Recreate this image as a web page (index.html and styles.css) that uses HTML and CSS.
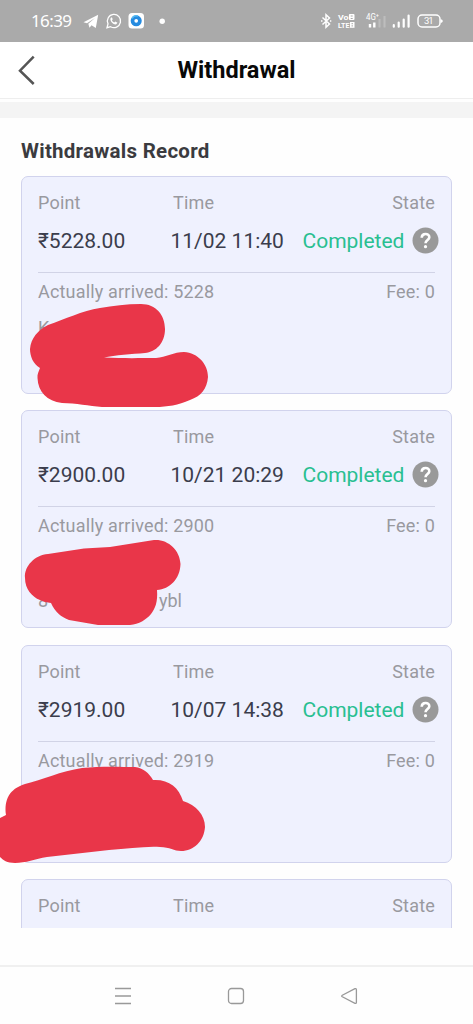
FILE: index.html
```html
<!DOCTYPE html>
<html lang="en">
<head>
<meta charset="utf-8">
<title>Withdrawal</title>
<link rel="stylesheet" href="styles.css">
</head>
<body>
<div class="screen">
  <div class="status">
    <span class="clock">16:39</span>
    <svg class="notifs" width="84" height="20" viewBox="83 11 84 20">
      <path d="M83.500 22.200L98.200 14.800L95.800 28L91.500 25.200L89.500 27.800L88.300 23.800L95 18L87 23.200Z" fill="#fff"/>
      <path d="M107 27.700L108 23.800A6.600 6.600 0 1 1 110.600 26.700Z" fill="none" stroke="#fff" stroke-width="1.300"/>
      <path d="M111 17.500C109 19.500 112 24.500 116 24.500L117.500 22.800L115.300 21.600L114.300 22.500C113 22 112.200 21 112 20.200L112.700 19.300L112 17.400Z" fill="#fff"/>
      <rect x="128.500" y="13" width="15.500" height="15.500" rx="3.500" fill="#fff"/>
      <circle cx="136.200" cy="20.800" r="3.700" fill="#fff" stroke="#258be0" stroke-width="3.700"/>
      <path d="M132 18.500A5 5 0 0 1 138 16" fill="none" stroke="#55baf2" stroke-width="1.500"/>
      <circle cx="162.200" cy="21.200" r="2.700" fill="#fff"/>
    </svg>
    <svg class="system" width="124" height="20" viewBox="320 11 124 20">
      <path d="M322.500 17.500L329.500 24L326 27.300V14.700L329.500 18L322.500 24.500M321 21h1.500M330 21h1.300" fill="none" stroke="#fff" stroke-width="1.500"/>
      <g class="tiny" fill="#fff">
        <text x="338" y="19.500" textLength="10.500" lengthAdjust="spacingAndGlyphs">Vo</text>
        <text x="338" y="27.800" textLength="11.500" lengthAdjust="spacingAndGlyphs">LTE</text>
        <rect x="348.900" y="14" width="5.600" height="6" rx="1"/>
        <path d="M350.700 16h2M350.700 18.500h2" stroke="#aaa"/>
        <rect x="350" y="22" width="4.500" height="5.800"/>
        <path d="M351.500 23.700h1.500M351.500 25.900h1.500" stroke="#aaa"/>
      </g>
      <text class="network" x="366" y="20" fill="#fff" textLength="13" lengthAdjust="spacingAndGlyphs">4G⁺</text>
      <path d="M370 24v3.500M374.300 22.500v5" stroke="#fff" stroke-width="2.400"/>
      <path d="M379.500 19v8.500M384.500 16v11.500" stroke="#bdbdbd" stroke-width="2"/>
      <path d="M393.800 25.200v1.500M398.700 22.500v4.200M403.700 19.500v7.200M408.600 15.500v11.200" stroke="#fff" stroke-width="2.200" stroke-linecap="round"/>
      <rect x="418" y="15" width="22" height="12" rx="4" fill="none" stroke="#fff" stroke-width="1.500"/>
      <path d="M440.500 19.200c3 .2 3 3.400 0 3.600" fill="#fff"/>
      <text class="battery" x="424" y="24.200" fill="#fff" textLength="9.500">31</text>
    </svg>
  </div>
  <header class="bar">
    <svg class="back" width="17" height="30" viewBox="0 0 17 30"><path d="M15.700 1.700L2 15.700L15.700 29" fill="none" stroke="#555" stroke-width="2.500"/></svg>
    <h1>Withdrawal</h1>
  </header>
  <div class="band"></div>
  <main class="records">
    <h2>Withdrawals Record</h2>
    <section class="card">
      <div class="row labels"><span>Point</span><span>Time</span><span>State</span></div>
      <div class="row values"><span>₹5228.00</span><span>11/02 11:40</span><span class="done">Completed</span><svg class="help" width="27" height="27" viewBox="0 0 27 27"><circle cx="13.500" cy="13.500" r="13" fill="#999"/><path d="M9.700 10.800C9.900 5.800 17.300 6 17.300 10.200C17.300 13 13.500 13 13.500 16.300" fill="none" stroke="#fff" stroke-width="2.600"/><circle cx="13.500" cy="19.700" r="1.600" fill="#fff"/></svg></div>
      <div class="row detail"><span>Actually arrived: 5228</span><span class="fee">Fee: 0</span></div>
      <div class="name">K</div>
    </section>
    <section class="card">
      <div class="row labels"><span>Point</span><span>Time</span><span>State</span></div>
      <div class="row values"><span>₹2900.00</span><span>10/21 20:29</span><span class="done">Completed</span><svg class="help" width="27" height="27" viewBox="0 0 27 27"><circle cx="13.500" cy="13.500" r="13" fill="#999"/><path d="M9.700 10.800C9.900 5.800 17.300 6 17.300 10.200C17.300 13 13.500 13 13.500 16.300" fill="none" stroke="#fff" stroke-width="2.600"/><circle cx="13.500" cy="19.700" r="1.600" fill="#fff"/></svg></div>
      <div class="row detail"><span>Actually arrived: 2900</span><span class="fee">Fee: 0</span></div>
      <div class="account"><span>8</span><span>ybl</span></div>
    </section>
    <section class="card">
      <div class="row labels"><span>Point</span><span>Time</span><span>State</span></div>
      <div class="row values"><span>₹2919.00</span><span>10/07 14:38</span><span class="done">Completed</span><svg class="help" width="27" height="27" viewBox="0 0 27 27"><circle cx="13.500" cy="13.500" r="13" fill="#999"/><path d="M9.700 10.800C9.900 5.800 17.300 6 17.300 10.200C17.300 13 13.500 13 13.500 16.300" fill="none" stroke="#fff" stroke-width="2.600"/><circle cx="13.500" cy="19.700" r="1.600" fill="#fff"/></svg></div>
      <div class="row detail"><span>Actually arrived: 2919</span><span class="fee">Fee: 0</span></div>
    </section>
    <section class="card">
      <div class="row labels"><span>Point</span><span>Time</span><span>State</span></div>
    </section>
  </main>
  <nav class="nav">
    <svg width="18" height="18" viewBox="0 0 18 18"><path d="M1 1.500h16M1 9h16M1 16.500h16"/></svg>
    <svg width="18" height="18" viewBox="0 0 18 18"><rect x="1.500" y="1.500" width="15" height="15" rx="3"/></svg>
    <svg width="18" height="18" viewBox="0 0 18 18"><path d="M15 1.700L2.300 8.200Q1 9 2.300 9.800L15 16.300Q16.400 16.800 16.400 15.200V2.800Q16.400 1.200 15 1.700Z"/></svg>
  </nav>
  <!-- Redaction strokes over private details -->
  <svg class="redactions" width="473" height="1024" viewBox="0 0 473 1024" fill="#e93649">
    <path d="M48 325C65 319 82 311 100 308C113 306 126 304 141 304C156 304 165 315 165 329C165 343 156 352 145 353C132 354 115 355 104 357.500C124 358.500 141 358 156 358C166 357 174 352 184 352C198 353 208 364 208 377C207 389 201 396 190 400C178 405 168 407 155 407H102C89 406 76 403 62 403C47 401 38 392 37.500 378C37 374 39 371 40 368C33 364 30 356 30 349C31 338 38 330 48 325Z"/>
    <path d="M48 554L84 548.500L110 547L154 540C168 539 180 550 180.500 564C180 579 170 589 157 590C158 602 155 609 151 614C146 620 139 624 130 625H98L69 620C61 617 55 612 51 603C47 602.500 43 601.500 40 600C32 597 25 589 25 578C24 566 35 555 48 554Z"/>
    <path d="M25 784C42 780 61 771 82 768C101 766 122 767 135 767C143 768 149 773 153 780C168 779 179 787 183 801C196 805 205 815 205 827C204 841 194 851 181 851C174 851 170 847 160 847C145 846 128 849 109 850L47 857C35 859 26 863 15 863C7 863 3 860 0 857V818L6 815C4 800 9 789 25 784Z"/>
  </svg>
</div>
</body>
</html>
```
FILE: styles.css
```css
* { box-sizing: border-box; }
body { margin: 0; font-family: Roboto, "Noto Sans", sans-serif; background: #fefefe; }
svg { display: block; flex: none; }
.screen { position: relative; width: 473px; height: 1024px; overflow: hidden; display: flex; flex-direction: column; }
.status { height: 42px; flex: none; background: #aaa; display: flex; align-items: center; padding: 0 29px 0 31px; }
.clock { color: #fff; font: 17px/42px "Noto Sans", sans-serif; width: 52px; letter-spacing: -0.600px; }
.system { margin-left: auto; }
.tiny { font: bold 7px Roboto, sans-serif; }
.network { font: 8.500px Roboto, sans-serif; }
.battery { font: 9.500px Roboto, sans-serif; }
.bar { height: 57px; flex: none; display: grid; grid-template-columns: 17px 1fr 17px; align-items: center; padding: 0 18px; background: #fff; border-bottom: 1px solid #eee; }
h1 { margin: 0; font-size: 23.500px; line-height: 56px; font-weight: 700; text-align: center; color: #080808; }
.band { height: 16px; flex: none; margin-top: 3px; background: #f4f4f4; }
.records { height: 810px; flex: none; overflow: hidden; padding: 18px 21px 0; }
h2 { margin: 0 0 10px; font-size: 20.500px; line-height: 30px; font-weight: 700; color: #3b3b3f; letter-spacing: 0.260px; }
.card { height: 218px; margin-bottom: 16.400px; padding: 14px 16px; background: #eff1fe; border: 1px solid #d1d3ed; border-radius: 7px; color: #99999f; font-size: 18px; }
.row { display: flex; }
.labels { line-height: 24px; letter-spacing: 0.200px; }
.labels span:first-child { width: 135px; }
.labels span:last-child { margin-left: auto; }
.values { height: 57px; padding-top: 12px; margin-right: -4px; align-items: flex-start; font-size: 21px; line-height: 28px; color: #3b3d4c; }
.values span:first-child { width: 132.500px; }
.values span:nth-child(2) { width: 132px; }
.values .done { color: #29bf91; }
.values .help { margin: 0 0 0 auto; }
.detail { border-top: 1px solid #d1d3e6; line-height: 24px; padding-top: 7px; letter-spacing: 0.180px; }
.fee { margin-left: auto; }
.name { margin-top: 12px; line-height: 24px; }
.account { display: flex; justify-content: space-between; width: 144px; margin-top: 51px; line-height: 24px; }
.nav { height: 59px; margin-top: auto; flex: none; border-top: 2px solid #f0f0f0; display: flex; align-items: center; justify-content: space-between; padding: 1px 115px 0 114px; }
.nav svg { fill: none; stroke: #999; stroke-width: 1.300; }
.redactions { position: absolute; inset: 0; pointer-events: none; }
```
